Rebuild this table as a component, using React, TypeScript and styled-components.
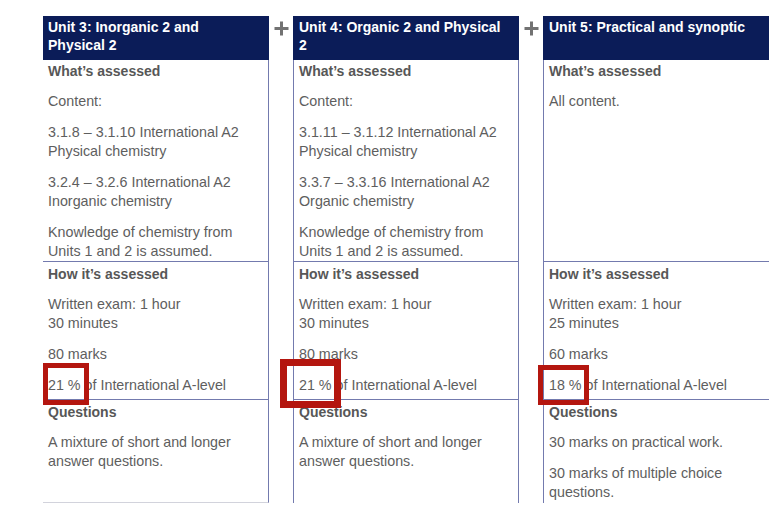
import styled, { createGlobalStyle } from "styled-components"

const GlobalStyle = createGlobalStyle`
  body {
    margin: 0;
    background: #ffffff;
    font-family: "Liberation Sans", Arial, sans-serif;
  }
`

const NAVY = "#0b1c58"
const RULE = "#737aae"
const TEXT = "#5e5e5e"

// row heights shared by every column, so sections line up across units
const ROWS = { what: 202, how: 138, questions: 103 }

const Page = styled.div`
  display: flex;
  align-items: flex-start;
  padding: 16px 0 0 43px;
`

const Column = styled.div<{ $w: number }>`
  display: flex;
  flex-direction: column;
  width: ${(p) => p.$w}px;
  flex: none;
`

const Header = styled.div<{ $left?: boolean; $right?: boolean }>`
  box-sizing: border-box;
  height: 44px;
  padding: 2px 10px 0 5px;
  background: ${NAVY};
  border-left: ${(p) => (p.$left ? `1px solid ${NAVY}` : "none")};
  border-right: ${(p) => (p.$right ? `1px solid ${NAVY}` : "none")};
  color: #ffffff;
  font-weight: 700;
  font-size: 14px;
  line-height: 18px;
`

const Section = styled.div<{
  $h: number
  $pad: number
  $left?: boolean
  $right?: boolean
  $bottom?: string
}>`
  box-sizing: border-box;
  height: ${(p) => p.$h}px;
  padding: ${(p) => p.$pad}px 10px 0 5px;
  border-left: ${(p) => (p.$left ? `1px solid ${RULE}` : "none")};
  border-right: ${(p) => (p.$right ? `1px solid ${RULE}` : "none")};
  border-bottom: ${(p) => (p.$bottom ? `1px solid ${p.$bottom}` : "none")};
  color: ${TEXT};
  font-size: 14.3px;
  line-height: 19px;
`

const Heading = styled.div`
  font-size: 14px;
  font-weight: 700;
  color: #575757;
  margin-bottom: 11px;
`

const Para = styled.p`
  position: relative;
  margin: 0 0 12px;
`

const Mark = styled.span<{
  $x: number
  $y: number
  $w: number
  $h: number
  $t: number
}>`
  position: absolute;
  left: ${(p) => p.$x}px;
  top: ${(p) => p.$y}px;
  width: ${(p) => p.$w}px;
  height: ${(p) => p.$h}px;
  box-sizing: border-box;
  border: ${(p) => p.$t}px solid #b4160f;
  pointer-events: none;
`

const Joiner = styled.div`
  width: 24px;
  flex: none;
  display: flex;
  justify-content: center;
  padding-top: 5px;
  color: #727272;
`

const Plus = () => (
  <Joiner>
    <svg width='15' height='15' viewBox='0 0 15 15'>
      <path d='M7.5 0.5v14M0.5 7.5h14' stroke='currentColor' strokeWidth='3' />
    </svg>
  </Joiner>
)

type MarkBox = { x: number; y: number; w: number; h: number; t: number }

type Unit = {
  title: string
  width: number
  left?: boolean
  right?: boolean
  bottom?: string
  what: string[][]
  how: string[][]
  percent: string
  mark: MarkBox
  questions: string[][]
}

const units: Unit[] = [
  {
    title: "Unit 3: Inorganic 2 and Physical 2",
    width: 226,
    right: true,
    bottom: "#d2d3dc",
    what: [
      ["Content:"],
      ["3.1.8 – 3.1.10 International A2", "Physical chemistry"],
      ["3.2.4 – 3.2.6 International A2", "Inorganic chemistry"],
      ["Knowledge of chemistry from", "Units 1 and 2 is assumed."],
    ],
    how: [["Written exam: 1 hour", "30 minutes"], ["80 marks"]],
    percent: "21 %",
    mark: { x: -5, y: -13, w: 46, h: 42, t: 5 },
    questions: [["A mixture of short and longer", "answer questions."]],
  },
  {
    title: "Unit 4: Organic 2 and Physical 2",
    width: 226,
    left: true,
    right: true,
    what: [
      ["Content:"],
      ["3.1.11 – 3.1.12 International A2", "Physical chemistry"],
      ["3.3.7 – 3.3.16 International A2", "Organic chemistry"],
      ["Knowledge of chemistry from", "Units 1 and 2 is assumed."],
    ],
    how: [["Written exam: 1 hour", "30 minutes"], ["80 marks"]],
    percent: "21 %",
    mark: { x: -19, y: -17, w: 61, h: 49, t: 7 },
    questions: [["A mixture of short and longer", "answer questions."]],
  },
  {
    title: "Unit 5: Practical and synoptic",
    width: 226,
    left: true,
    what: [["All content."]],
    how: [["Written exam: 1 hour", "25 minutes"], ["60 marks"]],
    percent: "18 %",
    mark: { x: -11, y: -11, w: 51, h: 40, t: 5 },
    questions: [
      ["30 marks on practical work."],
      ["30 marks of multiple choice", "questions."],
    ],
  },
]

const Lines = ({ lines }: { lines: string[] }) => (
  <Para>
    {lines.map((l, i) => (
      <span key={i}>
        {i > 0 && <br />}
        {l}
      </span>
    ))}
  </Para>
)

const UnitColumn = ({ unit }: { unit: Unit }) => (
  <Column $w={unit.width}>
    <Header $left={unit.left} $right={unit.right}>
      {unit.title}
    </Header>

    <Section
      $h={ROWS.what}
      $pad={2}
      $left={unit.left}
      $right={unit.right}
      $bottom={RULE}
    >
      <Heading>What’s assessed</Heading>
      {unit.what.map((p, i) => (
        <Lines key={i} lines={p} />
      ))}
    </Section>

    <Section
      $h={ROWS.how}
      $pad={3}
      $left={unit.left}
      $right={unit.right}
      $bottom={RULE}
    >
      <Heading>How it’s assessed</Heading>
      {unit.how.map((p, i) => (
        <Lines key={i} lines={p} />
      ))}
      <Para>
        {unit.percent} of International A-level
        <Mark
          $x={unit.mark.x}
          $y={unit.mark.y}
          $w={unit.mark.w}
          $h={unit.mark.h}
          $t={unit.mark.t}
        />
      </Para>
    </Section>

    <Section
      $h={ROWS.questions}
      $pad={3}
      $left={unit.left}
      $right={unit.right}
      $bottom={unit.bottom}
    >
      <Heading>Questions</Heading>
      {unit.questions.map((p, i) => (
        <Lines key={i} lines={p} />
      ))}
    </Section>
  </Column>
)

export default function App() {
  return (
    <>
      <GlobalStyle />
      <Page>
        <UnitColumn unit={units[0]} />
        <Plus />
        <UnitColumn unit={units[1]} />
        <Plus />
        <UnitColumn unit={units[2]} />
      </Page>
    </>
  )
}
